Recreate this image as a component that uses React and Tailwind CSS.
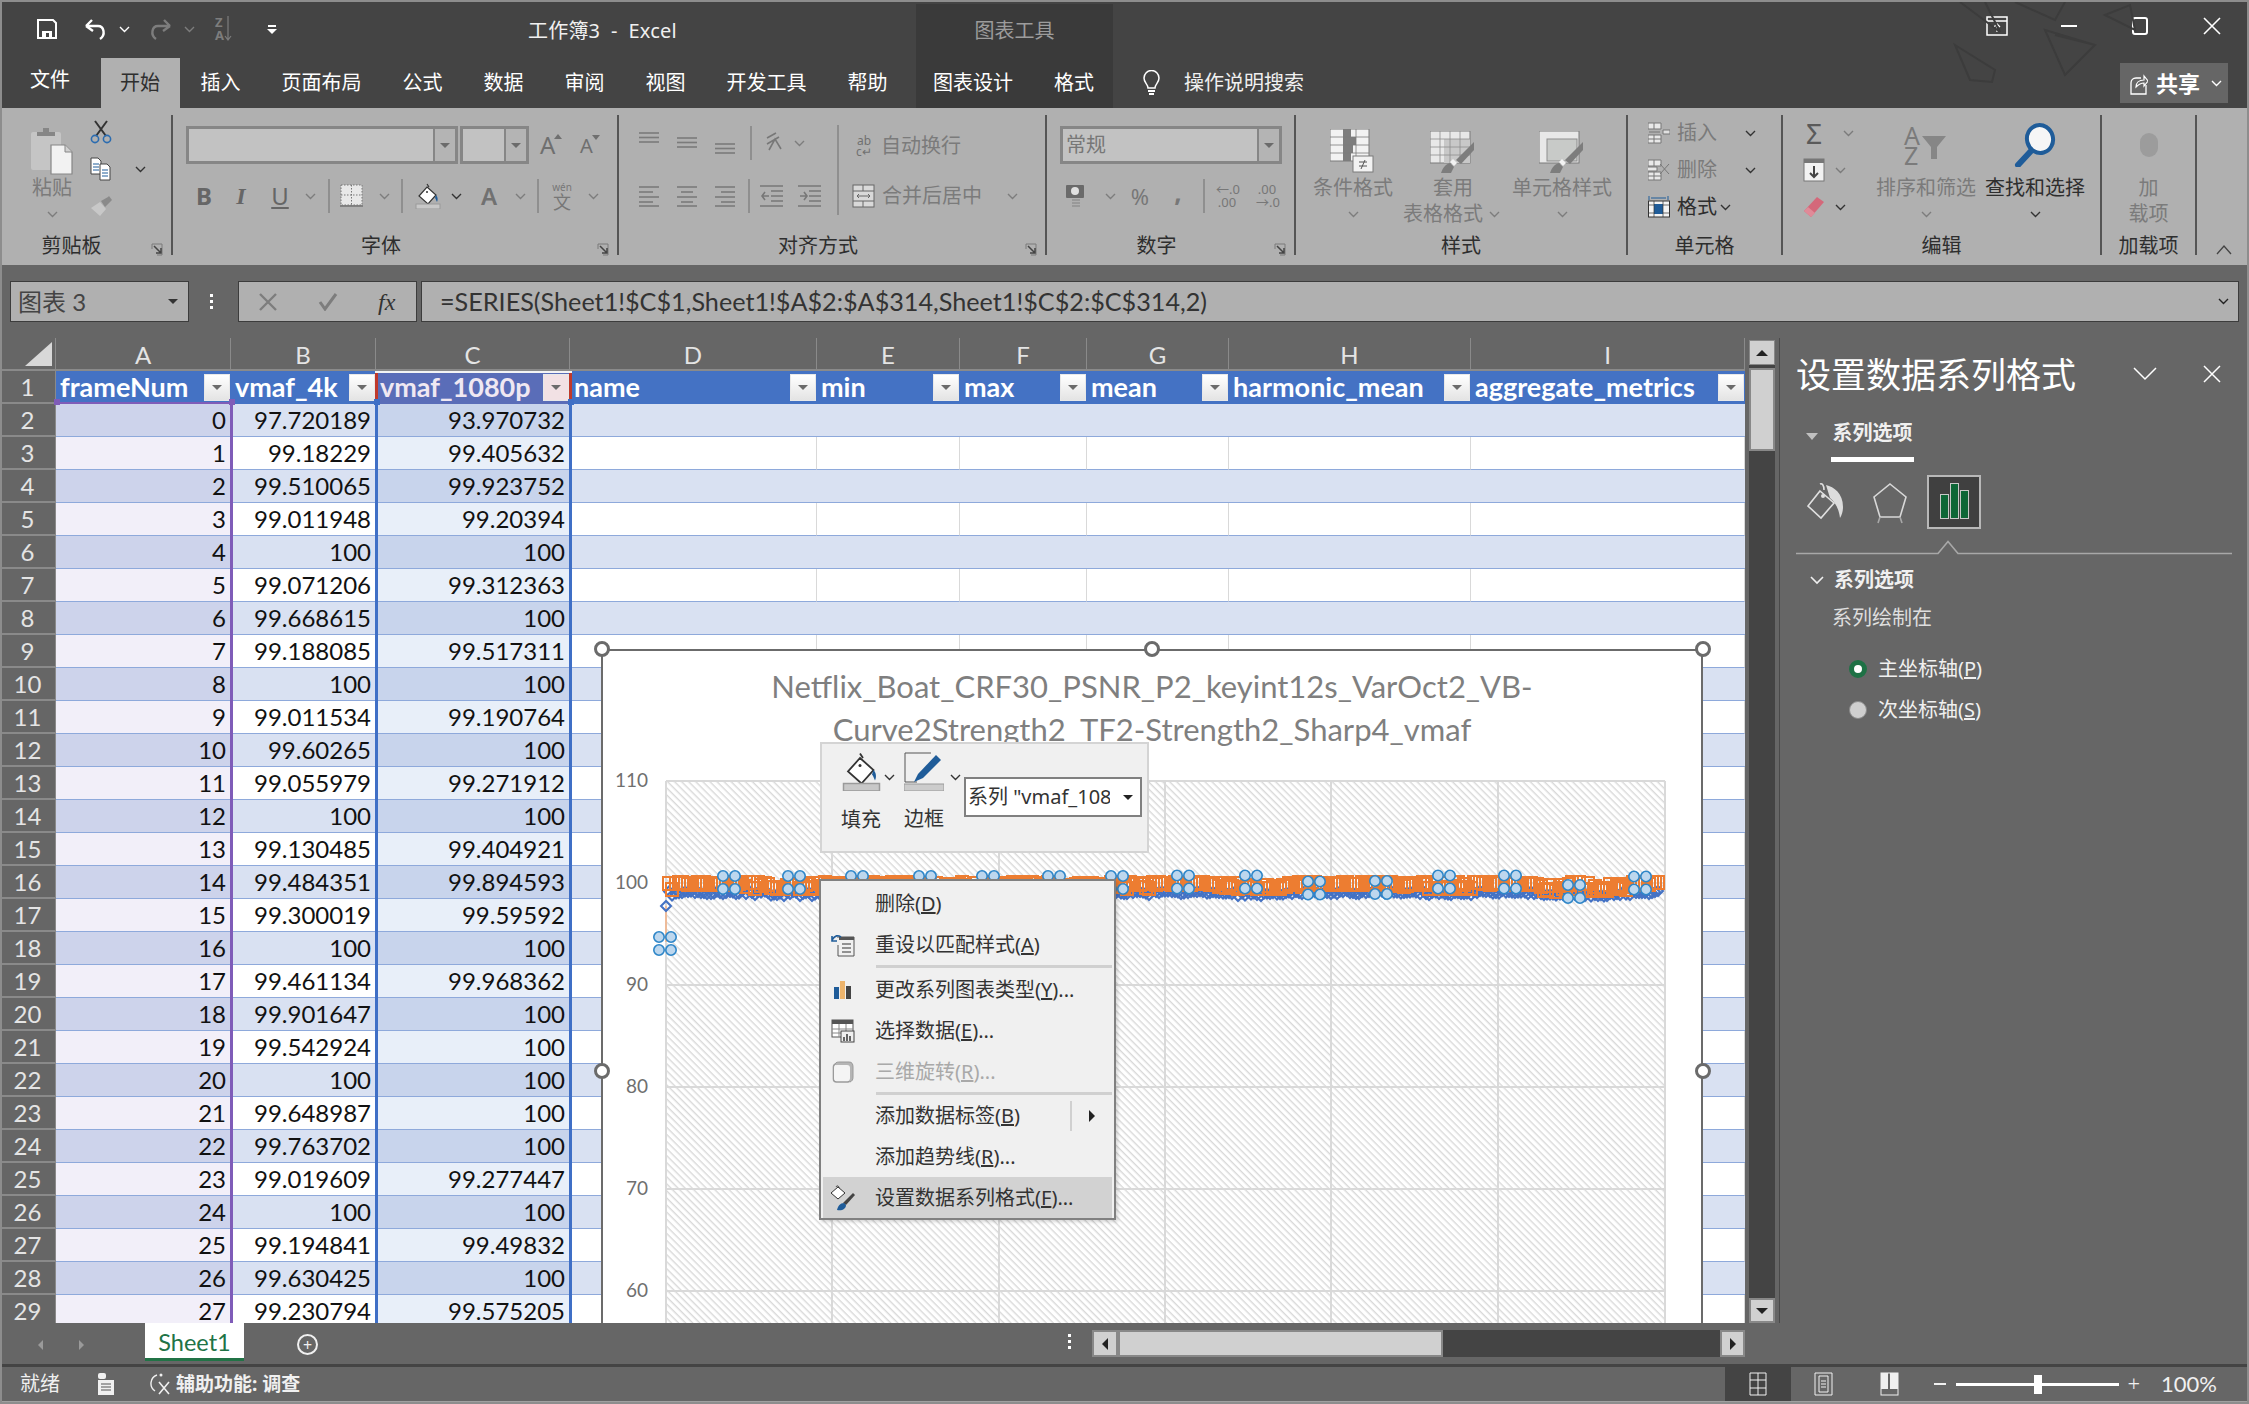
import React from 'react';

const rows = [
  [0, '97.720189', '93.970732'], [1, '99.18229', '99.405632'], [2, '99.510065', '99.923752'],
  [3, '99.011948', '99.20394'], [4, '100', '100'], [5, '99.071206', '99.312363'],
  [6, '99.668615', '100'], [7, '99.188085', '99.517311'], [8, '100', '100'],
  [9, '99.011534', '99.190764'], [10, '99.60265', '100'], [11, '99.055979', '99.271912'],
  [12, '100', '100'], [13, '99.130485', '99.404921'], [14, '99.484351', '99.894593'],
  [15, '99.300019', '99.59592'], [16, '100', '100'], [17, '99.461134', '99.968362'],
  [18, '99.901647', '100'], [19, '99.542924', '100'], [20, '100', '100'],
  [21, '99.648987', '100'], [22, '99.763702', '100'], [23, '99.019609', '99.277447'],
  [24, '100', '100'], [25, '99.194841', '99.49832'], [26, '99.630425', '100'], [27, '99.230794', '99.575205'],
];

const colHeads = [
  ['A', 'w-[175px]', 'frameNum'], ['B', 'w-[145px]', 'vmaf_4k'], ['C', 'w-[194px]', 'vmaf_1080p'],
  ['D', 'w-[247px]', 'name'], ['E', 'w-[143px]', 'min'], ['F', 'w-[127px]', 'max'],
  ['G', 'w-[142px]', 'mean'], ['H', 'w-[242px]', 'harmonic_mean'], ['I', 'w-[274px]', 'aggregate_metrics'],
];

const tabs = ['插入', '页面布局', '公式', '数据', '审阅', '视图', '开发工具', '帮助'];

// pseudo data for the two line series, same seed every render
function makeSeries() {
  let seed = 17;
  const rnd = () => {
    seed = (seed * 1103515245 + 12345) % 2147483648;
    return seed / 2147483648;
  };
  const orange = [];
  const blue = [];
  for (let i = 0; i < 313; i++) {
    const x = Math.round(664 + i * 3.18);
    const flat = Math.sin(i / 8) > 0.25;
    const amp = x > 1470 ? 11 : x < 720 ? 9 : 7;
    const o = flat ? Math.floor(rnd() * 3) : Math.floor(rnd() * amp);
    orange.push([x, Math.round(881 + o)]);
    blue.push([x, 889 + Math.floor(rnd() * 3) + o * 0.5]);
  }
  orange[0] = [664, 941];
  blue[0] = [664, 904];
  return { orange, blue };
}
const series = makeSeries();

const handles = [
  [663, 941.5], [727, 880.5], [792, 880.5], [855, 880.5], [923, 880.5], [986, 880.5], [1052, 880.5], [1115, 880.5],
  [1181, 880], [1249, 880], [1312, 886], [1379, 885.5], [1442, 880], [1508, 880], [1572, 889.5], [1638, 881],
];

function Chev({ className = 'text-[#7d7d7d]' }) {
  return (
    <svg width="11" height="7" viewBox="0 0 11 7" className={className}>
      <path d="M1 1l4.5 4.5L10 1" fill="none" stroke="currentColor" strokeWidth="1.4" />
    </svg>
  );
}

function Caret({ className = 'border-t-[#6b6b6b]' }) {
  return <div className={`w-0 h-0 border-x-[5px] border-x-transparent border-t-[5px] ${className}`} />;
}

function Launcher() {
  return (
    <svg width="13" height="13" viewBox="0 0 13 13">
      <path d="M1 6V1h10v11H6" fill="none" stroke="#7a7a7a" strokeWidth="1" />
      <path d="M3 3l7 7M10 5v5H5" fill="none" stroke="#444" strokeWidth="1.5" />
    </svg>
  );
}

function Group({ w, label, launcher, children }) {
  return (
    <div className={`${w} h-[140px] flex flex-col shrink-0 border-r-2 border-[#555555]`}>
      <div className="h-[122px] flex">{children}</div>
      <div className="h-[18px] flex items-center text-[20px] text-[#2e2e2e] leading-none">
        <div className="flex-1 text-center">{label}</div>
        {launcher && (
          <div className="w-[28px] shrink-0 flex justify-center pt-[6px]">
            <Launcher />
          </div>
        )}
      </div>
    </div>
  );
}

function Sep({ ml = '' }) {
  return <div className={`${ml} w-[2px] h-[34px] bg-[#8f8f8f] shrink-0`} />;
}

function Tall({ className = '', icon, line1, line2, dark, noChev }) {
  const color = dark ? 'text-[#2e2e2e]' : 'text-[#7b7b7b]';
  return (
    <div className={`${className} shrink-0 flex flex-col items-center`}>
      <div className="h-[60px] flex items-end justify-center">{icon}</div>
      <div className={`h-[26px] text-[20px] leading-[26px] whitespace-nowrap ${color}`}>{line1}</div>
      <div className={`h-[26px] text-[20px] leading-[26px] whitespace-nowrap flex items-center ${color}`}>
        {line2}
        {!noChev && <Chev className={dark ? 'text-[#333333]' : 'text-[#7d7d7d]'} />}
      </div>
    </div>
  );
}

function Lines({ w = 21, rows: r, stroke = '#7b7b7b' }) {
  return (
    <svg width={w} height="24" viewBox={`0 0 ${w} 24`}>
      {r.map(([a, b, y], i) => (
        <path key={i} d={`M${a} ${y}H${b}`} stroke={stroke} strokeWidth="1.6" />
      ))}
    </svg>
  );
}

function SmallTable({ children, w = 22 }) {
  return (
    <svg width={w} height="24" viewBox={`0 0 ${w} 24`}>
      {children}
    </svg>
  );
}

function PasteIcon() {
  return (
    <svg width="42" height="48" viewBox="0 0 42 48">
      <rect x="0" y="5" width="30" height="38" rx="2" fill="#c5c5c5" />
      <path d="M6 5h6V1h6v4h6v4H6z" fill="#868686" />
      <path d="M20 18h14l7 7v22H20z" fill="#f2f2f2" stroke="#868686" strokeWidth="1.2" />
      <path d="M34 18v7h7" fill="#d0d0d0" stroke="#868686" strokeWidth="1" />
    </svg>
  );
}

function CutIcon() {
  return (
    <svg width="22" height="24" viewBox="0 0 22 24">
      <path d="M5 1l11 15M17 1L6 16" stroke="#333" strokeWidth="2" fill="none" />
      <circle cx="5" cy="19" r="3.6" fill="none" stroke="#2b6cb0" strokeWidth="1.6" />
      <circle cx="17" cy="19" r="3.6" fill="none" stroke="#2b6cb0" strokeWidth="1.6" />
    </svg>
  );
}

function CopyIcon() {
  return (
    <svg width="22" height="24" viewBox="0 0 22 24">
      <path d="M1 1h7l3 3v13H1z" fill="#fff" stroke="#444" />
      <path d="M3 7h6M3 10h6M3 13h6" stroke="#1f5c99" />
      <path d="M10 7h7l3 3v13H10z" fill="#fff" stroke="#444" />
      <path d="M12 13h6M12 16h6M12 19h6" stroke="#1f5c99" />
    </svg>
  );
}

function BrushIcon() {
  return (
    <svg width="24" height="22" viewBox="0 0 24 22">
      <path d="M1 13l9-6 6 7-6 7z" fill="#c8c8c8" />
      <path d="M11 6l7-4 1-1 3 4-7 7z" fill="#8a8a8a" />
    </svg>
  );
}

function FillIcon({ size = 1 }) {
  return (
    <svg width={26 * size} height={26 * size} viewBox="0 0 26 26">
      <path d="M12 1l2 3M12 4l9 8-8 9-9-8z" fill="#fff" stroke="#333" strokeWidth="1.2" />
      <circle cx="12" cy="9" r="1" fill="#333" />
      <path d="M21 12c2 2 2 5 1 7-1-2-1-3-2-4z" fill="#1f5c99" />
      <rect x="1" y="21" width="24" height="5" fill="#c8c8c8" stroke="#9a9a9a" />
    </svg>
  );
}

function CondFormatIcon() {
  return (
    <svg width="46" height="46" viewBox="0 0 46 46">
      <rect x="0" y="0" width="39" height="32" fill="#f2f2f2" stroke="#7b7b7b" />
      <path d="M13 0h8v32h-8zM13 8h13v8H13zM13 16h10v8H13z" fill="#7d7d7d" />
      <path d="M0 8h39M0 16h39M0 24h39M26 0v32" stroke="#7b7b7b" strokeWidth="0.8" />
      <rect x="23" y="27" width="20" height="16" fill="#f2f2f2" stroke="#7b7b7b" />
      <path d="M29 33h8M29 37h8M35 31l-4 9" stroke="#555" fill="none" />
    </svg>
  );
}

function TableStyleIcon() {
  return (
    <svg width="46" height="44" viewBox="0 0 46 44">
      <rect x="0" y="0" width="40" height="32" fill="#e8e8e8" stroke="#7b7b7b" />
      <rect x="14" y="8" width="26" height="24" fill="#c8c8c8" />
      <path d="M0 8h40M0 16h40M0 24h40M10 0v32M20 0v32M30 0v32" stroke="#8d8d8d" strokeWidth="0.8" />
      <path d="M11 42c2-6 5-9 9-10l4 4-3 6z" fill="#7d7d7d" />
      <path d="M20 31l3-3 4 4-3 3z" fill="#f2f2f2" />
      <path d="M26 29l18-18v8l-13 14z" fill="#7d7d7d" />
    </svg>
  );
}

function CellStyleIcon() {
  return (
    <svg width="46" height="44" viewBox="0 0 46 44">
      <rect x="0" y="0" width="40" height="32" fill="#e8e8e8" stroke="#7b7b7b" />
      <rect x="8" y="8" width="30" height="22" fill="#c8cac8" stroke="#8d8d8d" />
      <path d="M11 42c2-6 5-9 9-10l4 4-3 6z" fill="#7d7d7d" />
      <path d="M20 31l3-3 4 4-3 3z" fill="#f2f2f2" />
      <path d="M26 29l18-18v8l-13 14z" fill="#7d7d7d" />
    </svg>
  );
}

function BarChartIcon() {
  return (
    <svg width="20" height="20" viewBox="0 0 20 20">
      <rect x="1" y="7" width="5" height="12" fill="#1f5c99" />
      <rect x="7" y="1" width="5" height="18" fill="#edb46c" />
      <rect x="13" y="6" width="5" height="13" fill="#444" />
    </svg>
  );
}

function Chart() {
  const hLines = [779, 881, 983, 1085, 1187, 1289];
  const vLines = [664, 830, 997, 1163, 1329, 1496, 1663];
  return (
    <svg width="1101" height="674" viewBox="601 649 1101 674" className="block">
      <defs>
        <pattern id="hatch" width="5" height="5" patternUnits="userSpaceOnUse" patternTransform="rotate(45)">
          <rect width="5" height="5" fill="#ffffff" />
          <rect width="5" height="1.4" fill="#d9d9d9" />
        </pattern>
      </defs>
      <rect x="664" y="779" width="999" height="544" fill="url(#hatch)" />
      {hLines.map((y) => (
        <path key={y} d={`M664 ${y}H1663`} stroke="#d9d9d9" strokeWidth="2" />
      ))}
      {vLines.map((x) => (
        <path key={x} d={`M${x} 779V1323`} stroke="#d9d9d9" strokeWidth="2" />
      ))}
      {['110', '100', '90', '80', '70', '60'].map((t, i) => (
        <text key={t} x="646" y={hLines[i] + 6} textAnchor="end" fontSize="19" fill="#6f6f6f" fontFamily="Lato, sans-serif">
          {t}
        </text>
      ))}
      <path d="M664 904V940" stroke="#f4b183" strokeWidth="1.5" />
      {series.blue.map(([x, y], i) => (
        <path key={i} d={`M${x} ${y - 5}l5 5-5 5-5-5z`} fill="none" stroke="#4472c4" strokeWidth="2" />
      ))}
      {series.orange.slice(1).map(([x, y], i) => (
        <rect key={i} x={x - 6} y={y - 7} width="12" height="13" fill="none" stroke="#ed7d31" strokeWidth="2" shapeRendering="crispEdges" />
      ))}
      {handles.map(([cx, cy], i) => (
        <g key={i} fill="#bdd7ee" stroke="#2e86c8" strokeWidth="1.6">
          <circle cx={cx - 6} cy={cy - 6.5} r="5.2" />
          <circle cx={cx + 6} cy={cy - 6.5} r="5.2" />
          <circle cx={cx - 6} cy={cy + 6.5} r="5.2" />
          <circle cx={cx + 6} cy={cy + 6.5} r="5.2" />
        </g>
      ))}
    </svg>
  );
}

function MenuItem({ icon, children, active, disabled, more }) {
  return (
    <div className={`h-[41px] flex items-center text-[20px] ${active ? 'bg-[#d2d2d2]' : ''} ${disabled ? 'text-[#a9a9a9]' : 'text-[#333333]'}`}>
      <div className="w-[52px] shrink-0 flex justify-center pr-[12px]">{icon}</div>
      <div className="flex-1 whitespace-nowrap">{children}</div>
      {more && (
        <div className="h-[30px] w-[42px] shrink-0 border-l-2 border-[#d0d0d0] flex items-center justify-center">
          <div className="w-0 h-0 border-y-[6px] border-y-transparent border-l-[6px] border-l-[#222222]" />
        </div>
      )}
    </div>
  );
}

function Handle({ className }) {
  return <div className={`absolute w-[16px] h-[16px] rounded-full bg-white border-[3px] border-[#6b6b6b] ${className}`} />;
}

export default function App() {
  return (
    <div className="relative w-[2249px] h-[1404px] overflow-hidden bg-[#666666] flex flex-col font-['Noto_Sans','Noto_Sans_CJK_SC',sans-serif]">
      {/* title bar */}
      <div className="relative h-[58px] bg-[#444444] flex shrink-0 text-white">
        <svg width="290" height="84" viewBox="0 0 290 84" className="absolute left-[1945px] top-0 pointer-events-none">
          <g fill="none" stroke="#3c3c3c" strokeWidth="2">
            <path d="M15 2l40 30-15-30M70 2l40 18 10-18M100 30l50 15-30 30zM150 45l-40-10M160 15l25-10 5 25zM10 45l40 25-3 12-22-2z" />
          </g>
        </svg>
        <div className="w-[528px] flex items-center shrink-0">
          <svg width="20" height="20" viewBox="0 0 20 20" className="ml-[37px]">
            <path d="M1 1h15l3 3v15H1z" fill="none" stroke="#fff" strokeWidth="2" />
            <path d="M5 12h10v7H5z" fill="#fff" />
            <path d="M9 14h3v4H9z" fill="#444" />
          </svg>
          <svg width="24" height="22" viewBox="0 0 24 22" className="ml-[27px]">
            <path d="M2 8l6-6M2 8l7 5M3 8h11c6 0 8 9 2 13" fill="none" stroke="#fff" strokeWidth="2.4" />
          </svg>
          <Chev className="ml-[11px] text-white" />
          <svg width="24" height="22" viewBox="0 0 24 22" className="ml-[18px]">
            <path d="M22 8l-6-6M22 8l-7 5M21 8H10C4 8 2 17 8 21" fill="none" stroke="#7d7d7d" strokeWidth="2.4" />
          </svg>
          <Chev className="ml-[12px] text-[#7d7d7d]" />
          <div className="ml-[20px] w-[22px] flex items-center text-[#7d7d7d] text-[13px] leading-[13px] font-bold">
            <div className="flex flex-col">
              <span>Z</span>
              <span>A</span>
            </div>
            <svg width="8" height="26" viewBox="0 0 8 26">
              <path d="M4 0v24M1 20l3 4 3-4" fill="none" stroke="#7d7d7d" strokeWidth="1.2" />
            </svg>
          </div>
          <div className="ml-[30px] flex flex-col items-center gap-[2px]">
            <div className="w-[8px] h-[2px] bg-white" />
            <Caret className="border-t-white" />
          </div>
        </div>
        <div className="w-[388px] shrink-0 flex items-center pt-[3px] text-[20px] text-[#f0f0f0] whitespace-pre tracking-[0.2px]">工作簿3  -  Excel</div>
        <div className="w-[197px] shrink-0 mt-[4px] bg-[#3a3a3a] flex items-center justify-center text-[20px] text-[#9c9c9c]">图表工具</div>
        <div className="flex-1 flex items-start justify-end">
          <div className="flex items-center mt-[16px]">
            <svg width="22" height="20" viewBox="0 0 22 20">
              <rect x="1" y="1" width="20" height="18" fill="none" stroke="#fff" strokeWidth="1.5" />
              <path d="M1 5h20M11 16V8M8 11l3-3 3 3" fill="none" stroke="#fff" strokeWidth="1.3" />
            </svg>
            <div className="ml-[53px] w-[16px] h-[2px] bg-white" />
            <div className="ml-[55px] w-[16px] h-[18px] rounded-[3px] border-2 border-white" />
            <svg width="18" height="18" viewBox="0 0 18 18" className="ml-[55px] mr-[28px]">
              <path d="M1 1l16 16M17 1L1 17" stroke="#fff" strokeWidth="1.6" />
            </svg>
          </div>
        </div>
      </div>

      {/* tabs */}
      <div className="h-[50px] bg-[#444444] flex shrink-0 text-[20px] text-white">
        <div className="ml-[10px] w-[80px] flex items-center justify-center pb-[6px]">文件</div>
        <div className="ml-[11px] w-[79px] bg-[#b0b0b0] text-[#2e2e2e] flex items-center justify-center pr-[1px]">开始</div>
        {tabs.map((t) => (
          <div key={t} className="px-[20.5px] flex items-center">{t}</div>
        ))}
        <div className="ml-[8px] w-[197px] bg-[#3a3a3a] flex items-center pl-[17px] gap-[41px]">
          <span>图表设计</span>
          <span>格式</span>
        </div>
        <svg width="17" height="26" viewBox="0 0 17 26" className="ml-[30px] mt-[12px]">
          <path d="M5 18c0-4-4-5-4-10a7.5 7.5 0 0115 0c0 5-4 6-4 10z" fill="none" stroke="#fff" strokeWidth="1.5" />
          <path d="M5 21h7M6 24h5" stroke="#fff" strokeWidth="1.8" />
        </svg>
        <div className="ml-[24px] flex items-center text-[20px] text-[#f0f0f0]">操作说明搜索</div>
        <div className="ml-[816px] mt-[5px] w-[108px] h-[40px] bg-[#666666] flex items-center">
          <svg width="19" height="26" viewBox="0 0 19 26" className="ml-[9px]">
            <path d="M12 8H7c-3 0-5 2-5 5v11h15V15" fill="none" stroke="#fff" strokeWidth="1.3" />
            <path d="M7 17c0-4 3-7 8-7V6l4 5-4 5v-3c-3 0-5 1-8 4z" fill="none" stroke="#fff" strokeWidth="1.2" />
          </svg>
          <span className="ml-[8px] font-bold text-[22px]">共享</span>
          <Chev className="ml-[11px] text-white" />
        </div>
      </div>

      {/* ribbon */}
      <div className="h-[157px] bg-[#b0b0b0] flex pt-[7px] shrink-0 text-[#7b7b7b]">
        <Group w="w-[173px]" label="剪贴板" launcher>
          <Tall className="ml-[30px] w-[44px]" icon={<PasteIcon />} line1="粘贴" />
          <div className="ml-[16px] flex flex-col pt-[5px]">
            <div className="h-[24px]"><CutIcon /></div>
            <div className="mt-[13px] h-[24px] flex items-center">
              <CopyIcon />
              <Chev className="ml-[23px] text-[#333333]" />
            </div>
            <div className="mt-[14px]"><BrushIcon /></div>
          </div>
        </Group>

        <Group w="w-[446px]" label="字体" launcher>
          <div className="flex flex-col pt-[11px]">
            <div className="h-[38px] flex items-center">
              <div className="ml-[13px] w-[272px] h-[38px] bg-[#c2c2c2] border-[3px] border-[#868686] flex justify-end">
                <div className="w-[22px] h-full border-l-2 border-[#868686] bg-[#b4b4b4] flex items-center justify-center"><Caret /></div>
              </div>
              <div className="ml-[2px] w-[69px] h-[38px] bg-[#c2c2c2] border-[3px] border-[#868686] flex justify-end">
                <div className="w-[22px] h-full border-l-2 border-[#868686] bg-[#b4b4b4] flex items-center justify-center"><Caret /></div>
              </div>
              <div className="ml-[11px] w-[16px] flex items-end text-[24px] leading-none text-[#6f6f6f]">A<div className="mb-[18px] -ml-[1px] w-0 h-0 border-x-[4px] border-x-transparent border-b-[5px] border-b-[#6f6f6f]" /></div>
              <div className="ml-[24px] w-[16px] flex items-end text-[20px] leading-none text-[#6f6f6f]">A<div className="mb-[16px] -ml-[1px] w-0 h-0 border-x-[4px] border-x-transparent border-t-[5px] border-t-[#6f6f6f]" /></div>
            </div>
            <div className="mt-[15px] h-[34px] flex items-center text-[#666666]">
              <div className="ml-[18px] w-[26px] text-center text-[24px] font-bold leading-none">B</div>
              <div className="ml-[10px] w-[28px] text-center text-[24px] italic font-['Liberation_Serif',serif] font-bold leading-none">I</div>
              <div className="ml-[12px] w-[26px] text-center text-[24px] underline leading-none">U</div>
              <div className="ml-[7px] w-[20px] flex justify-center"><Chev /></div>
              <Sep ml="ml-[8px]" />
              <svg width="24" height="24" viewBox="0 0 24 24" className="ml-[10px]">
                <rect x="1" y="1" width="21" height="20" fill="#e8e8e8" />
                <path d="M1 1h21v20H1zM11.5 1v20M1 11h21" fill="none" stroke="#777" strokeDasharray="1.5 1.5" />
                <path d="M0 22h23" stroke="#777" strokeWidth="1.6" />
              </svg>
              <div className="ml-[10px] w-[20px] flex justify-center"><Chev /></div>
              <Sep ml="ml-[7px]" />
              <div className="ml-[11px] w-[28px] flex justify-center"><FillIcon /></div>
              <div className="ml-[4px] w-[20px] flex justify-center"><Chev className="text-[#333333]" /></div>
              <div className="ml-[12px] w-[22px] text-center text-[24px] leading-none font-semibold text-[#717171]">A</div>
              <div className="ml-[10px] w-[20px] flex justify-center"><Chev /></div>
              <Sep ml="ml-[7px]" />
              <div className="ml-[11px] w-[24px] flex flex-col items-center text-[#777777] leading-none">
                <span className="text-[10px]">wén</span>
                <span className="text-[18px] font-['Noto_Sans_CJK_SC',sans-serif]">文</span>
              </div>
              <div className="ml-[9px] w-[20px] flex justify-center"><Chev /></div>
            </div>
          </div>
        </Group>

        <Group w="w-[428px]" label="对齐方式" launcher>
          <div className="w-[218px] shrink-0 flex flex-col pt-[11px]">
            <div className="h-[34px] flex items-center">
              <div className="ml-[20px]"><Lines rows={[[0, 20, 2], [0, 20, 6.5], [0, 20, 11]]} /></div>
              <div className="ml-[17px]"><Lines rows={[[0, 20, 7], [0, 20, 11.5], [0, 20, 16]]} /></div>
              <div className="ml-[17px]"><Lines rows={[[0, 20, 13], [0, 20, 17.5], [0, 20, 22]]} /></div>
              <Sep ml="ml-[14px]" />
              <svg width="20" height="24" viewBox="0 0 20 24" className="ml-[13px]">
                <path d="M2 7l9-5M2 13L14 6M4 19l6-11 6 10" fill="none" stroke="#777" strokeWidth="1.6" />
              </svg>
              <div className="ml-[6px] w-[16px] flex justify-center"><Chev /></div>
            </div>
            <div className="mt-[19px] h-[34px] flex items-center">
              <div className="ml-[20px]"><Lines w={22} rows={[[0, 20, 3], [0, 14, 8], [0, 20, 13], [0, 14, 18], [0, 20, 22]]} /></div>
              <div className="ml-[16px]"><Lines w={22} rows={[[0, 20, 3], [4, 16, 8], [0, 20, 13], [4, 16, 18], [0, 20, 22]]} /></div>
              <div className="ml-[16px]"><Lines w={22} rows={[[0, 20, 3], [6, 20, 8], [0, 20, 13], [6, 20, 18], [0, 20, 22]]} /></div>
              <Sep ml="ml-[11px]" />
              <svg width="23" height="24" viewBox="0 0 23 24" className="ml-[10px]">
                <path d="M0 2h23M11 7h12M11 12h12M11 17h12M0 22h23" stroke="#777" strokeWidth="1.4" />
                <path d="M9 12H2M5 8l-3 4 3 4" fill="none" stroke="#777" strokeWidth="1.6" />
              </svg>
              <svg width="23" height="24" viewBox="0 0 23 24" className="ml-[15px]">
                <path d="M0 2h23M11 7h12M11 12h12M11 17h12M0 22h23" stroke="#777" strokeWidth="1.4" />
                <path d="M2 12h7M6 8l3 4-3 4" fill="none" stroke="#777" strokeWidth="1.6" />
              </svg>
            </div>
          </div>
          <div className="w-[2px] h-[90px] mt-[10px] bg-[#8f8f8f] shrink-0" />
          <div className="flex flex-col pt-[14px]">
            <div className="h-[34px] flex items-center">
              <div className="ml-[15px] w-[20px] text-[12px] leading-[11px] text-[#707070] text-center">ab<br />c↵</div>
              <span className="ml-[7px] text-[20px]">自动换行</span>
            </div>
            <div className="mt-[16px] h-[34px] flex items-center">
              <svg width="23" height="24" viewBox="0 0 23 24" className="ml-[13px]">
                <rect x="1" y="1" width="21" height="22" fill="#d9d9d9" stroke="#666" />
                <path d="M1 7h21M1 17h21M11 1v6M11 17v6" stroke="#666" />
                <path d="M5 12h13M7 10l-2 2 2 2M16 10l2 2-2 2" fill="none" stroke="#666" />
              </svg>
              <span className="ml-[7px] text-[20px]">合并后居中</span>
              <div className="ml-[25px]"><Chev /></div>
            </div>
          </div>
        </Group>

        <Group w="w-[249px]" label="数字" launcher>
          <div className="flex flex-col pt-[11px]">
            <div className="ml-[13px] w-[222px] h-[38px] bg-[#c2c2c2] border-[3px] border-[#868686] flex items-center">
              <span className="ml-[3px] flex-1 text-[20px] text-[#777777]">常规</span>
              <div className="w-[22px] h-full border-l-2 border-[#868686] bg-[#b4b4b4] flex items-center justify-center"><Caret /></div>
            </div>
            <div className="mt-[15px] h-[34px] flex items-center text-[#777777]">
              <svg width="18" height="24" viewBox="0 0 18 24" className="ml-[19px]">
                <rect x="0" y="1" width="18" height="13" rx="1" fill="#6a6a6a" />
                <circle cx="9" cy="7" r="4" fill="#e0e0e0" />
                <path d="M6 16h8M6 19h8M6 22h8" stroke="#999" strokeWidth="2" />
              </svg>
              <div className="ml-[19px] w-[14px] flex justify-center"><Chev /></div>
              <div className="ml-[13px] w-[20px] text-[22px] leading-none text-center">%</div>
              <div className="ml-[22px] w-[12px] text-[26px] leading-none font-bold text-center -mt-[8px]">,</div>
              <Sep ml="ml-[19px]" />
              <div className="ml-[11px] w-[22px] text-[13px] leading-[13px] text-center">←.0<br />.00</div>
              <div className="ml-[18px] w-[22px] text-[13px] leading-[13px] text-center">.00<br />→.0</div>
            </div>
          </div>
        </Group>

        <Group w="w-[332px]" label="样式">
          <Tall className="ml-[7px] w-[100px]" icon={<CondFormatIcon />} line1="条件格式" />
          <div className="w-[100px] shrink-0 flex flex-col">
            <div className="h-[60px] flex items-end justify-center"><TableStyleIcon /></div>
            <div className="h-[26px] text-center text-[20px] leading-[26px]">套用</div>
            <div className="h-[26px] w-[120px] flex items-center text-[20px] leading-[26px] whitespace-nowrap">
              表格格式
              <Chev className="ml-[6px] text-[#7d7d7d]" />
            </div>
          </div>
          <Tall className="ml-[8px] w-[102px]" icon={<CellStyleIcon />} line1="单元格样式" />
        </Group>

        <Group w="w-[155px]" label="单元格">
          <div className="flex flex-col gap-[1px] text-[20px]">
            <div className="h-[36px] flex items-center">
              <div className="ml-[20px] w-[22px]">
                <SmallTable>
                  <path d="M0 2h13v6H0zM0 14h13v8H0zM6 2v6M6 14v8M0 18h13" fill="#e8e8e8" stroke="#777" />
                  <path d="M15 9h7v4h-7z" fill="#e0e0e0" stroke="#777" />
                  <path d="M12 11H1" stroke="#777" />
                </SmallTable>
              </div>
              <span className="ml-[7px] w-[40px]">插入</span>
              <Chev className="ml-[28px] text-[#333333]" />
            </div>
            <div className="h-[36px] flex items-center">
              <div className="ml-[20px] w-[22px]">
                <SmallTable>
                  <path d="M0 2h13v6H0zM0 14h13v8H0zM6 2v6M6 14v8M0 18h13M0 9h9v4H0" fill="#e8e8e8" stroke="#777" />
                  <path d="M12 6l9 10M21 6l-9 10" stroke="#777" />
                </SmallTable>
              </div>
              <span className="ml-[7px] w-[40px]">删除</span>
              <Chev className="ml-[28px] text-[#333333]" />
            </div>
            <div className="h-[36px] flex items-center">
              <div className="ml-[20px] w-[22px]">
                <SmallTable>
                  <path d="M1 1v4M20 1v4M3 3h15" stroke="#1f5c99" fill="none" />
                  <rect x="0.5" y="6" width="21" height="16" fill="#f4f4f4" stroke="#333" />
                  <rect x="6" y="9" width="9" height="10" fill="#1f5c99" />
                  <path d="M0 10h6M15 10h6M0 18h6M15 18h6M6 6v16M15 6v16" stroke="#333" strokeWidth="0.7" />
                </SmallTable>
              </div>
              <span className="ml-[7px] w-[40px] text-[#2e2e2e]">格式</span>
              <Chev className="ml-[3px] text-[#333333]" />
            </div>
          </div>
        </Group>

        <Group w="w-[319px]" label="编辑">
          <div className="w-[93px] shrink-0 flex flex-col gap-[1px]">
            <div className="h-[36px] flex items-center">
              <span className="ml-[20px] w-[22px] text-[28px] leading-none text-[#5a5a5a] text-center">Σ</span>
              <Chev className="ml-[18px]" />
            </div>
            <div className="h-[36px] flex items-center">
              <svg width="22" height="24" viewBox="0 0 22 24" className="ml-[20px]">
                <rect x="1" y="1" width="20" height="22" fill="#f2f2f2" stroke="#777" />
                <rect x="1" y="1" width="20" height="4" fill="#777" />
                <path d="M11 8v11M7 15l4 4 4-4" fill="none" stroke="#444" strokeWidth="2" />
              </svg>
              <Chev className="ml-[10px]" />
            </div>
            <div className="h-[36px] flex items-center">
              <svg width="22" height="22" viewBox="0 0 22 22" className="ml-[20px]">
                <path d="M1 15L14 1l7 5L8 21z" fill="#d4687a" />
                <path d="M1 15l4-4 7 6-4 4z" fill="#e08a98" />
              </svg>
              <Chev className="ml-[10px] text-[#333333]" />
            </div>
          </div>
          <Tall
            className="w-[100px]"
            icon={
              <div className="flex items-start text-[#7b7b7b] mb-[10px] ml-[-2px]">
                <div className="flex flex-col text-[25px] leading-[20px]"><span>A</span><span>Z</span></div>
                <svg width="24" height="24" viewBox="0 0 24 24" className="mt-[10px] ml-[2px]">
                  <path d="M0 1h24l-9 11v12h-6V12z" fill="#868686" />
                </svg>
              </div>
            }
            line1="排序和筛选"
          />
          <Tall
            className="ml-[9px] w-[100px]"
            dark
            icon={
              <svg width="42" height="44" viewBox="0 0 42 44" className="mb-[8px]">
                <ellipse cx="26" cy="16" rx="13" ry="14" fill="#f6f6f6" stroke="#1f5c99" strokeWidth="4" transform="rotate(-15 26 16)" />
                <path d="M17 28L4 42" stroke="#1f5c99" strokeWidth="6" strokeLinecap="round" />
              </svg>
            }
            line1="查找和选择"
          />
        </Group>

        <Group w="w-[95px]" label="加载项">
          <Tall
            className="w-[93px]"
            noChev
            icon={<div className="w-[18px] h-[24px] rounded-full bg-[#9c9c9c] mb-[18px]" />}
            line1="加"
            line2="载项"
          />
        </Group>
        <div className="flex-1 flex items-start pt-[130px] pl-[19px]">
          <svg width="16" height="10" viewBox="0 0 16 10">
            <path d="M1 9l7-8 7 8" fill="none" stroke="#444" strokeWidth="1.3" />
          </svg>
        </div>
      </div>

      {/* formula bar */}
      <div className="h-[73px] bg-[#666666] flex pt-[16px] shrink-0">
        <div className="ml-[10px] w-[179px] h-[41px] bg-[#b0b0b0] border border-[#3c3c3c] flex items-center text-[24px] text-[#444444]">
          <span className="ml-[7px] flex-1 font-['Lato','Noto_Sans_CJK_SC',sans-serif]">图表 3</span>
          <div className="mr-[10px]"><Caret className="border-t-[#333333]" /></div>
        </div>
        <div className="ml-[21px] flex flex-col gap-[3px] justify-center h-[41px]">
          <div className="w-[3px] h-[3px] bg-white" />
          <div className="w-[3px] h-[3px] bg-white" />
          <div className="w-[3px] h-[3px] bg-white" />
        </div>
        <div className="ml-[25px] w-[179px] h-[41px] bg-[#b0b0b0] border border-[#3c3c3c] flex items-center">
          <svg width="18" height="18" viewBox="0 0 18 18" className="ml-[20px]">
            <path d="M1 1l16 16M17 1L1 17" stroke="#7d7d7d" strokeWidth="2.4" />
          </svg>
          <svg width="20" height="18" viewBox="0 0 20 18" className="ml-[41px]">
            <path d="M2 9l5 7L18 1" fill="none" stroke="#7d7d7d" strokeWidth="3" />
          </svg>
          <span className="ml-[40px] text-[24px] italic font-['Liberation_Serif',serif] text-[#333333] leading-none">fx</span>
        </div>
        <div className="ml-[4px] w-[1818px] h-[41px] bg-[#b0b0b0] border border-[#3c3c3c] flex items-center text-[#333333]">
          <span className="ml-[18px] flex-1 text-[25.2px] font-['Lato',sans-serif] whitespace-nowrap">=SERIES(Sheet1!$C$1,Sheet1!$A$2:$A$314,Sheet1!$C$2:$C$314,2)</span>
          <Chev className="mr-[9px] text-[#222222]" />
        </div>
      </div>

      {/* main area */}
      <div className="flex h-[985px] shrink-0">
        <div className="relative w-[1745px] h-[985px] overflow-hidden shrink-0 font-['Lato','Noto_Sans_CJK_SC',sans-serif] text-[24px]">
          <div className="h-[33px] flex">
            <div className="w-[56px] flex items-end justify-end pr-[3px] pb-[3px] border-b-2 border-[#8a8a8a] border-r border-r-[#8a8a8a]">
              <div className="w-0 h-0 border-l-[27px] border-l-transparent border-b-[24px] border-b-[#d8d8d8]" />
            </div>
            {colHeads.map(([h, w]) => (
              <div key={h} className={`${w} text-center text-[#e4e4e4] border-r border-[#8a8a8a] border-b-2 border-b-[#8a8a8a] leading-[33px]`}>{h}</div>
            ))}
          </div>
          <div className="h-[33px] flex">
            <div className="w-[56px] border-b-2 border-[#8a8a8a] border-r border-r-[#8a8a8a] text-center text-[#e4e4e4] leading-[32px]">1</div>
            {colHeads.map(([h, w, name]) => (
              <div key={h} className={`${w} flex items-center justify-between pl-[4px] pr-[1px] text-white text-[27px] font-bold whitespace-nowrap ${h === 'C' ? 'bg-[#5a6db8]' : 'bg-[#4472c4]'}`}>
                <span className={h === 'C' ? 'text-[#f0e8f2]' : ''}>{name}</span>
                <div className={`w-[26px] h-[27px] flex items-center justify-center border border-[#e8e8e8] shrink-0 ${h === 'C' ? 'bg-[#f2e1e4]' : 'bg-gradient-to-b from-white to-[#e4e4e4]'}`}>
                  <Caret />
                </div>
              </div>
            ))}
          </div>
          {rows.map(([a, b, c], i) => {
            const band = i % 2 === 0;
            return (
              <div key={a} className="h-[33px] flex">
                <div className="w-[56px] border-b-2 border-[#8a8a8a] border-r border-r-[#8a8a8a] text-center text-[#e4e4e4] leading-[32px]">{i + 2}</div>
                <div className={`w-[175px] text-right pr-[5px] text-[#111111] leading-[32px] border-b border-[#8ea9db] ${band ? 'bg-[#cdd3eb]' : 'bg-[#f2eff9]'}`}>{a}</div>
                <div className={`w-[145px] text-right pr-[5px] text-[#111111] leading-[32px] border-b border-[#8ea9db] ${band ? 'bg-[#d9e1f2]' : 'bg-white'}`}>{b}</div>
                <div className={`w-[194px] text-right pr-[5px] text-[#111111] leading-[32px] border-b border-[#8ea9db] ${band ? 'bg-[#c8d4ec]' : 'bg-[#e8eff9]'}`}>{c}</div>
                {colHeads.slice(3).map(([h, w]) => (
                  <div key={h} className={`${w} border-b border-[#8ea9db] ${band ? 'bg-[#d9e1f2]' : 'bg-white border-r border-r-[#d9d9d9]'}`} />
                ))}
              </div>
            );
          })}

          {/* range selection lines */}
          <div className="absolute left-[56px] top-[64px] w-[175px] h-[2px] bg-[#7f5cb8]" />
          <div className="absolute left-[230px] top-[66px] w-[3px] h-[919px] bg-[#7f5cb8]" />
          <div className="absolute left-[375px] top-[66px] w-[3px] h-[919px] bg-[#3f6fc6]" />
          <div className="absolute left-[569px] top-[66px] w-[3px] h-[919px] bg-[#3f6fc6]" />
          <div className="absolute left-[375px] top-[33px] w-[3px] h-[32px] bg-[#c0392b]" />
          <div className="absolute left-[569px] top-[33px] w-[3px] h-[32px] bg-[#c0392b]" />
          <div className="absolute left-[375px] top-[33px] w-[197px] h-[2px] bg-[#f4f4f4]" />
          <div className="absolute left-[54px] top-[61px] w-[6px] h-[6px] bg-[#7f5cb8]" />
          <div className="absolute left-[229px] top-[61px] w-[6px] h-[6px] bg-[#7f5cb8]" />
          <div className="absolute left-[374px] top-[61px] w-[6px] h-[6px] bg-[#3f6fc6]" />
          <div className="absolute left-[568px] top-[61px] w-[6px] h-[6px] bg-[#3f6fc6]" />

          {/* chart */}
          <div className="absolute left-[601px] top-[311px] w-[1102px] h-[680px] bg-white border-2 border-[#6b6b6b] overflow-hidden">
            <div className="absolute left-0 top-0"><Chart /></div>
            <div className="relative pt-[14px] text-center text-[31px] leading-[43px] text-[#7f7f7f]">
              <div>Netflix_Boat_CRF30_PSNR_P2_keyint12s_VarOct2_VB-</div>
              <div>Curve2Strength2_TF2-Strength2_Sharp4_vmaf</div>
            </div>
          </div>
          <Handle className="left-[594px] top-[303px]" />
          <Handle className="left-[1144px] top-[303px]" />
          <Handle className="left-[1695px] top-[303px]" />
          <Handle className="left-[594px] top-[725px]" />
          <Handle className="left-[1695px] top-[725px]" />

          {/* mini toolbar */}
          <div className="absolute left-[820px] top-[404px] w-[329px] h-[111px] bg-[#f0f0f0] border-2 border-[#d4d4d4] flex font-['Noto_Sans','Noto_Sans_CJK_SC',sans-serif] text-[20px] text-[#333333]">
            <div className="ml-[18px] w-[42px] flex flex-col items-center pt-[8px]">
              <FillIcon size={1.5} />
              <span className="mt-[16px] leading-[26px]">填充</span>
            </div>
            <div className="ml-[2px] mt-[30px]"><Chev className="text-[#333333]" /></div>
            <div className="ml-[8px] w-[42px] flex flex-col items-center pt-[8px]">
              <svg width="40" height="39" viewBox="0 0 40 39">
                <path d="M1 1h26M1 1v29h12" fill="none" stroke="#555" />
                <path d="M10 30l4-8L32 3l5 5-18 18z" fill="#1f5c99" />
                <rect x="0" y="32" width="40" height="7" fill="#cccccc" stroke="#9a9a9a" />
              </svg>
              <span className="mt-[15px] leading-[26px]">边框</span>
            </div>
            <div className="ml-[5px] mt-[30px]"><Chev className="text-[#333333]" /></div>
            <div className="ml-[3px] mt-[33px] w-[178px] h-[40px] bg-white border-2 border-[#808080] flex items-center">
              <span className="ml-[2px] w-[142px] overflow-hidden whitespace-nowrap">系列 "vmaf_1080p"</span>
              <div className="ml-[13px]"><Caret className="border-t-[#222222]" /></div>
            </div>
          </div>

          {/* context menu */}
          <div className="absolute left-[819px] top-[541px] w-[297px] h-[341px] bg-[#f0f0f0] border-2 border-[#808080] p-[2px] font-['Noto_Sans','Noto_Sans_CJK_SC',sans-serif] shadow-[2px_2px_3px_rgba(0,0,0,0.15)]">
            <MenuItem>删除(<u>D</u>)</MenuItem>
            <MenuItem icon={
              <svg width="24" height="24" viewBox="0 0 24 24">
                <path d="M6 4h17v19H7V12" fill="none" stroke="#555" />
                <path d="M8 4h15v3H8z" fill="#555" />
                <path d="M11 11h9M11 15h9M11 19h9" stroke="#333" />
                <path d="M1 7c3-5 6-5 9-3M1 3v5h5" fill="none" stroke="#1f5c99" strokeWidth="1.6" />
              </svg>
            }>重设以匹配样式(<u>A</u>)</MenuItem>
            <div className="ml-[53px] h-[3px] mb-[1px] bg-[#d0d0d0]" />
            <MenuItem icon={<BarChartIcon />}>更改系列图表类型(<u>Y</u>)...</MenuItem>
            <MenuItem icon={
              <svg width="24" height="24" viewBox="0 0 24 24">
                <rect x="1" y="1" width="21" height="17" fill="#fff" stroke="#555" />
                <rect x="1" y="1" width="21" height="4" fill="#555" />
                <path d="M8 5v13M15 5v13M1 10h21M1 14h21" stroke="#888" />
                <rect x="10" y="12" width="13" height="11" fill="#f0f0f0" stroke="#444" />
                <path d="M13 22v-4M16 22v-7M19 22v-5" stroke="#444" strokeWidth="1.6" />
              </svg>
            }>选择数据(<u>E</u>)...</MenuItem>
            <MenuItem disabled icon={
              <svg width="22" height="22" viewBox="0 0 22 22">
                <rect x="1.5" y="3" width="17" height="18" rx="3" fill="#f4f4f4" stroke="#9a9a9a" strokeWidth="1.6" />
                <path d="M3 3c1-2 3-2 5-2h9c3 0 4 2 4 5v10c0 3-1 4-3 5" fill="#b5b5b5" stroke="#9a9a9a" />
                <rect x="2" y="4" width="16" height="16" rx="3" fill="#f4f4f4" />
              </svg>
            }>三维旋转(<u>R</u>)...</MenuItem>
            <div className="ml-[53px] h-[3px] bg-[#d0d0d0]" />
            <MenuItem more>添加数据标签(<u>B</u>)</MenuItem>
            <MenuItem>添加趋势线(<u>R</u>)...</MenuItem>
            <MenuItem active icon={
              <svg width="26" height="26" viewBox="0 0 26 26">
                <path d="M1 8l7-6 7 6-7 6z" fill="#fff" stroke="#333" />
                <path d="M6 2c1-2 3-1 3 1" fill="none" stroke="#333" />
                <path d="M13 18L23 8l2 2-9 10z" fill="#444" />
                <path d="M7 25c1-4 3-7 7-7l2 2c0 4-4 6-9 5z" fill="#1f5c99" />
              </svg>
            }>设置数据系列格式(<u>F</u>)...</MenuItem>
          </div>
        </div>

        {/* vertical scrollbar */}
        <div className="ml-[4px] w-[26px] h-[983px] mt-[2px] bg-[#444444] flex flex-col shrink-0">
          <div className="h-[25px] bg-[#d0d0d0] border border-[#888888] flex items-center justify-center">
            <div className="w-0 h-0 border-x-[6px] border-x-transparent border-b-[6px] border-b-[#222222]" />
          </div>
          <div className="mt-[3px] h-[83px] bg-[#d0d0d0] border-2 border-[#888888]" />
          <div className="flex-1" />
          <div className="h-[25px] bg-[#d0d0d0] border-2 border-[#888888] flex items-center justify-center">
            <div className="w-0 h-0 border-x-[6px] border-x-transparent border-t-[6px] border-t-[#222222]" />
          </div>
        </div>

        {/* format pane */}
        <div className="ml-[4px] w-[470px] h-[1022px] bg-[#666666] border-l border-[#4a4a4a] flex flex-col text-[#f0f0f0] shrink-0">
          <div className="mt-[18px] h-[36px] flex items-center">
            <span className="ml-[16px] text-[35px] leading-none text-white">设置数据系列格式</span>
            <svg width="24" height="14" viewBox="0 0 24 14" className="ml-[57px]">
              <path d="M1 1l11 11L23 1" fill="none" stroke="#fff" strokeWidth="1.5" />
            </svg>
            <svg width="18" height="18" viewBox="0 0 18 18" className="ml-[46px]">
              <path d="M1 1l16 16M17 1L1 17" stroke="#fff" strokeWidth="1.5" />
            </svg>
          </div>
          <div className="mt-[24px] flex">
            <div className="ml-[26px] mt-[17px] w-0 h-0 border-x-[6px] border-x-transparent border-t-[7px] border-t-[#c0c0c0]" />
            <div className="ml-[13px] w-[83px] h-[46px] border-b-[5px] border-white text-center text-[20px] font-bold leading-[34px]">系列选项</div>
          </div>
          <div className="mt-[13px] flex items-start">
            <svg width="38" height="40" viewBox="0 0 38 40" className="ml-[27px] mt-[7px]">
              <path d="M13 2c2-1 4 1 4 6M13 9l14 12-13 15L1 24z" fill="none" stroke="#e0e0e0" strokeWidth="1.6" />
              <circle cx="16" cy="14" r="2" fill="#e0e0e0" />
              <path d="M19 3c8 2 17 8 17 22 0 4-1 8-3 11-1-8-4-15-10-20z" fill="#dcdcdc" />
            </svg>
            <svg width="36" height="42" viewBox="0 0 36 42" className="ml-[27px] mt-[7px]">
              <path d="M18 2l16 13-6 20H8L2 15z" fill="none" stroke="#d8d8d8" strokeWidth="1.6" />
              <path d="M8 35l-2 6M28 35l2 6" stroke="#a8a8a8" strokeWidth="1.6" />
            </svg>
            <div className="ml-[19px] w-[54px] h-[54px] bg-[#404040] border-2 border-[#b8b8b8] flex items-end justify-center pb-[8px] gap-[1px]">
              <div className="w-[9px] h-[25px] bg-[#0d6636] border border-[#c8c8c8]" />
              <div className="w-[9px] h-[36px] bg-[#0d6636] border border-[#c8c8c8]" />
              <div className="w-[9px] h-[29px] bg-[#0d6636] border border-[#c8c8c8]" />
            </div>
          </div>
          <svg width="436" height="16" viewBox="0 0 436 16" className="ml-[16px] mt-[10px]">
            <path d="M0 14.5h142l10-12 10 12h274" fill="none" stroke="#a8a8a8" strokeWidth="1.6" />
          </svg>
          <div className="mt-[12px] flex items-center">
            <svg width="14" height="9" viewBox="0 0 14 9" className="ml-[30px]">
              <path d="M1 1l6 6 6-6" fill="none" stroke="#f0f0f0" strokeWidth="1.6" />
            </svg>
            <span className="ml-[10px] text-[20px] font-bold leading-[26px]">系列选项</span>
          </div>
          <div className="mt-[12px] ml-[52px] text-[20px] leading-[26px] text-[#dedede]">系列绘制在</div>
          <div className="mt-[25px] ml-[69px] flex items-center h-[26px]">
            <div className="w-[18px] h-[18px] rounded-full bg-white border-[5px] border-[#1e7145]" />
            <span className="ml-[11px] text-[20px] text-[#f0f0f0]">主坐标轴(<u>P</u>)</span>
          </div>
          <div className="mt-[15px] ml-[69px] flex items-center h-[26px]">
            <div className="w-[18px] h-[18px] rounded-full bg-[#cfcfcf] border border-[#8a8a8a]" />
            <span className="ml-[11px] text-[20px] text-[#f0f0f0]">次坐标轴(<u>S</u>)</span>
          </div>
        </div>
      </div>

      {/* sheet tabs */}
      <div className="h-[41px] bg-[#666666] flex shrink-0 w-[1780px] relative">
        <div className="ml-[38px] mt-[17px] w-0 h-0 border-y-[5px] border-y-transparent border-r-[5px] border-r-[#9a9a9a]" />
        <div className="ml-[36px] mt-[17px] w-0 h-0 border-y-[5px] border-y-transparent border-l-[5px] border-l-[#9a9a9a]" />
        <div className="ml-[61px] w-[99px] h-[38px] bg-white border-b-[3px] border-[#217346] text-center text-[23.5px] leading-[38px] text-[#217346] font-['Lato',sans-serif]">Sheet1</div>
        <div className="ml-[53px] mt-[11px] w-[21px] h-[21px] rounded-full border-2 border-[#f0f0f0] flex items-center justify-center text-[#f0f0f0] text-[16px] leading-none">+</div>
        <div className="ml-[750px] mt-[11px] flex flex-col gap-[3px]">
          <div className="w-[3px] h-[3px] bg-white" />
          <div className="w-[3px] h-[3px] bg-white" />
          <div className="w-[3px] h-[3px] bg-white" />
        </div>
        <div className="ml-[21px] mt-[7px] w-[653px] h-[27px] flex">
          <div className="w-[26px] bg-[#d0d0d0] border-2 border-[#888888] flex items-center justify-center">
            <div className="w-0 h-0 border-y-[6px] border-y-transparent border-r-[6px] border-r-[#222222]" />
          </div>
          <div className="w-[325px] bg-[#d0d0d0] border-2 border-[#888888]" />
          <div className="w-[277px] bg-[#444444]" />
          <div className="w-[25px] bg-[#d0d0d0] border-2 border-[#888888] flex items-center justify-center">
            <div className="w-0 h-0 border-y-[6px] border-y-transparent border-l-[6px] border-l-[#222222]" />
          </div>
        </div>
      </div>

      {/* status bar */}
      <div className="h-[3px] bg-[#444444] shrink-0" />
      <div className="h-[34px] bg-[#666666] flex items-stretch shrink-0 text-[#f0f0f0] text-[20px]">
        <span className="ml-[20px] w-[40px] leading-[34px]">就绪</span>
        <svg width="20" height="24" viewBox="0 0 20 24" className="ml-[36px] mt-[5px]">
          <rect x="2" y="1" width="8" height="6" rx="2" fill="#f0f0f0" />
          <rect x="2" y="8" width="16" height="15" fill="#f0f0f0" />
          <path d="M5 12h10M5 15h10M5 18h10" stroke="#555" />
        </svg>
        <svg width="22" height="24" viewBox="0 0 22 24" className="ml-[34px] mt-[5px]">
          <path d="M7 3a9 9 0 00-2 16" fill="none" stroke="#f0f0f0" strokeWidth="1.4" />
          <path d="M9 10l10 12M19 10L9 22" stroke="#f0f0f0" strokeWidth="1.6" />
          <circle cx="11" cy="3" r="1.5" fill="#f0f0f0" />
        </svg>
        <span className="ml-[4px] font-bold leading-[34px] text-[19px] whitespace-pre">辅助功能: 调查</span>
        <div className="flex-1" />
        <div className="w-[66px] bg-[#444444] flex items-center justify-center">
          <svg width="18" height="24" viewBox="0 0 18 24">
            <path d="M1 1h16v22H1zM9 1v22M1 8h16M1 16h16" fill="none" stroke="#f0f0f0" />
          </svg>
        </div>
        <svg width="19" height="24" viewBox="0 0 19 24" className="ml-[23px] mt-[5px]">
          <path d="M1 1h17v22H1z" fill="none" stroke="#f0f0f0" />
          <path d="M5 4h9v16H5z" fill="none" stroke="#f0f0f0" />
          <path d="M7 9h5M7 12h5M7 15h5" stroke="#f0f0f0" />
        </svg>
        <svg width="19" height="24" viewBox="0 0 19 24" className="ml-[47px] mt-[5px]">
          <rect x="1" y="1" width="17" height="22" fill="none" stroke="#f0f0f0" />
          <rect x="1" y="1" width="7" height="16" fill="#f0f0f0" />
          <rect x="10" y="1" width="8" height="16" fill="#f0f0f0" />
        </svg>
        <div className="ml-[35px] w-[12px] h-[2px] bg-[#f0f0f0] self-center" />
        <div className="ml-[10px] w-[163px] h-[3px] bg-white self-center relative">
          <div className="absolute left-[78px] -top-[8px] w-[8px] h-[19px] bg-white" />
        </div>
        <span className="ml-[8px] text-[22px] leading-[32px] font-light">+</span>
        <span className="ml-[21px] w-[54px] mr-[34px] leading-[34px] font-['Lato',sans-serif] text-[22px] whitespace-nowrap">100%</span>
      </div>
      <div className="h-[3px] bg-[#a0a0a0] shrink-0" />

      {/* window edge */}
      <div className="absolute inset-0 border-2 border-[#8d8d8d] pointer-events-none" />
    </div>
  );
}
